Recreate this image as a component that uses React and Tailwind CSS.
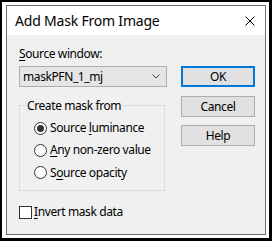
export default function App() {
  const U = ({ children }) => (
    <span className="underline underline-offset-[2px] decoration-1">{children}</span>
  );
  return (
    <div className="w-[272px] h-[241px] bg-black pl-[2px] pt-[2px] pr-[3px] pb-[3px] font-['Noto_Sans',sans-serif] text-[12px] leading-[16px] tracking-[-0.4px] text-black">
      <div className="w-full h-full bg-white pl-[4px] pt-[3px] pr-[3px] pb-[3px]">
        <div className="w-full h-full border border-[#6e6e6e] flex flex-col">
          <div className="h-[29px] shrink-0 bg-white flex items-center justify-between pl-[8px] pr-[10px]">
            <span className="text-[14px] leading-[18px] tracking-[-0.2px]">Add Mask From Image</span>
            <svg width="10" height="10" viewBox="0 0 10 10">
              <path d="M0.5 0.5L9.5 9.5M9.5 0.5L0.5 9.5" stroke="#000" strokeWidth="1" />
            </svg>
          </div>
          <div className="flex-1 bg-[#f0f0f0] flex">
            <div className="w-[148px] ml-[12px] pt-[11px] flex flex-col">
              <div>
                <U>S</U>ource window:
              </div>
              <div className="mt-[4px] h-[21px] border border-[#adadad] bg-[#e5e5e5] flex items-center justify-between pl-[3px] pr-[6px]">
                <span>maskPFN_1_mj</span>
                <svg width="8" height="5" viewBox="0 0 8 5">
                  <path d="M0.5 0.5L4 4L7.5 0.5" stroke="#444" strokeWidth="1" fill="none" />
                </svg>
              </div>
              <div className="relative mt-[18px] w-[146px] h-[86px] border border-[#dcdcdc] pl-[14px] pt-[11px] flex flex-col">
                <span className="absolute left-[6px] top-[-8px] px-[1px] bg-[#f0f0f0]">Create mask from</span>
                <div className="h-[22px] flex items-center">
                  <span className="w-[13px] h-[13px] rounded-full border border-[#333] bg-white flex items-center justify-center">
                    <span className="w-[7px] h-[7px] rounded-full bg-[#333]" />
                  </span>
                  <span className="ml-[3px]">Source <U>l</U>uminance</span>
                </div>
                <div className="h-[22px] flex items-center">
                  <span className="w-[13px] h-[13px] rounded-full border border-[#333] bg-white" />
                  <span className="ml-[3px]"><U>A</U>ny non-zero value</span>
                </div>
                <div className="h-[23px] flex items-center">
                  <span className="w-[13px] h-[13px] rounded-full border border-[#333] bg-white" />
                  <span className="ml-[3px]">S<U>o</U>urce opacity</span>
                </div>
              </div>
              <div className="mt-[13px] h-[16px] flex items-center">
                <span className="w-[13px] h-[13px] border border-[#333] bg-white" />
                <span className="ml-[2px]"><U>I</U>nvert mask data</span>
              </div>
            </div>
            <div className="ml-[14px] pt-[31px] flex flex-col">
              <button className="w-[74px] h-[21px] border-2 border-[#0078d7] bg-[#e1e1e1] flex items-center justify-center">OK</button>
              <button className="mt-[9px] w-[74px] h-[21px] border border-[#adadad] bg-[#e1e1e1] flex items-center justify-center">Cancel</button>
              <button className="mt-[8px] w-[74px] h-[21px] border border-[#adadad] bg-[#e1e1e1] flex items-center justify-center">Help</button>
            </div>
          </div>
        </div>
      </div>
    </div>
  );
}
